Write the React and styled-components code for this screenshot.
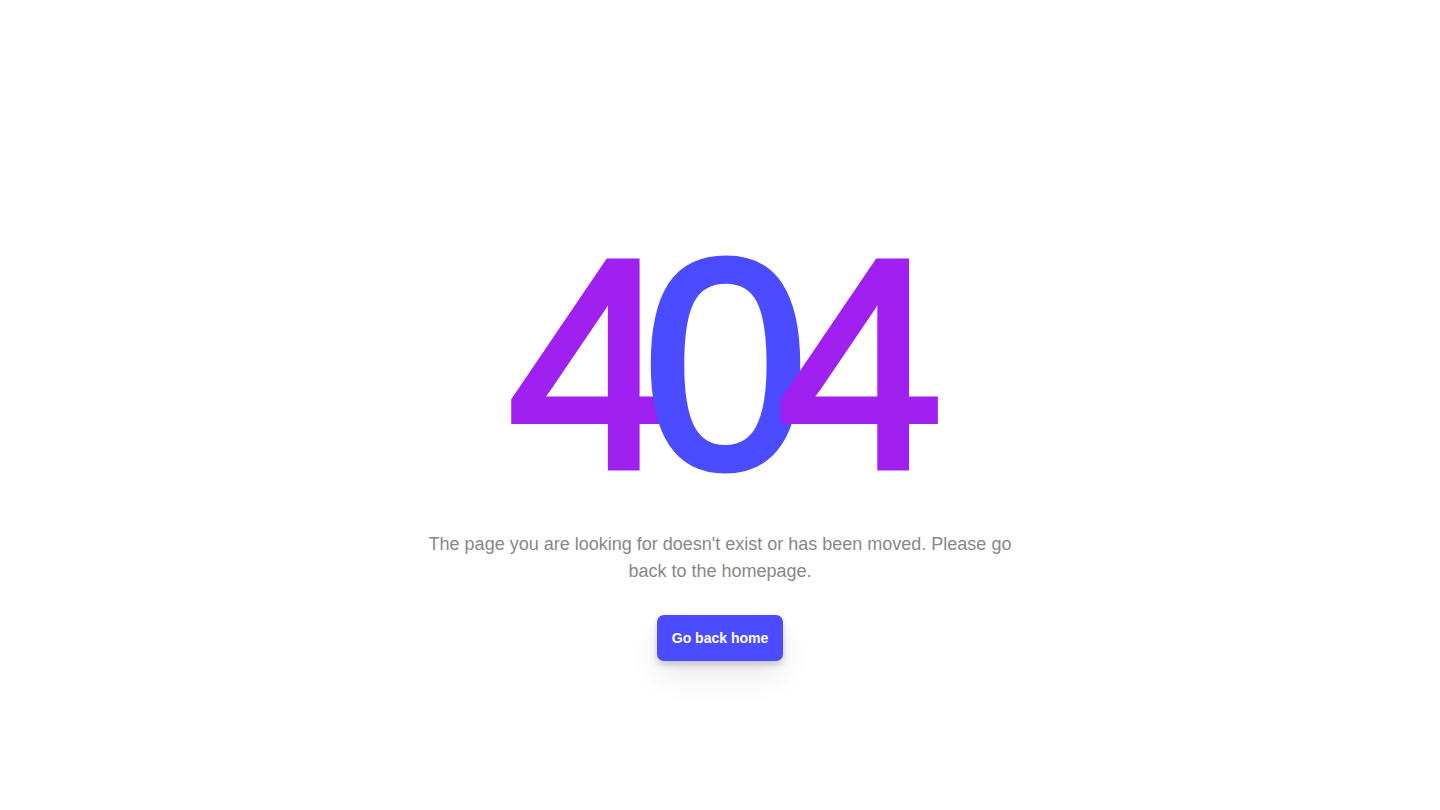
import styled, { createGlobalStyle } from "styled-components";

const GlobalStyle = createGlobalStyle`
  * {
    box-sizing: border-box;
  }
  body {
    margin: 0;
    background-color: #ffffff;
    font-family: "Liberation Sans", Arial, sans-serif;
  }
`;

const NotFoundPage = styled.main`
  display: flex;
  flex-direction: column;
  align-items: center;
  justify-content: center;
  min-height: 100vh;
  padding-top: 66px;
  text-align: center;
`;

const ErrorCode = styled.h1`
  display: flex;
  margin: 0;
  padding-left: 11px;
  font-size: 298px;
  font-weight: 400;
  line-height: 1;
`;

const Digit = styled.span`
  color: ${(props) => (props.$zero ? "#4b4bff" : "#a020f0")};
  -webkit-text-stroke: 7px ${(props) => (props.$zero ? "#4b4bff" : "#a020f0")};
  margin: ${(props) => (props.$zero ? "0 -31px" : "0")};
`;

const Message = styled.p`
  max-width: 600px;
  margin: 18px 0 0;
  color: #888888;
  font-size: 18px;
  line-height: 27px;
`;

const HomeButton = styled.button`
  margin-top: 30px;
  padding: 14px 15px;
  border: none;
  border-radius: 7px;
  background-color: #4b4bff;
  color: #ffffff;
  font-family: "Liberation Sans", Arial, sans-serif;
  font-size: 14px;
  font-weight: 700;
  line-height: 18px;
  cursor: pointer;
  box-shadow: 0 4px 6px rgba(0, 0, 0, 0.18), 0 16px 30px rgba(0, 0, 0, 0.08);
`;

export default function App() {
  return (
    <>
      <GlobalStyle />
      <NotFoundPage>
        <ErrorCode>
          <Digit>4</Digit>
          <Digit $zero>0</Digit>
          <Digit>4</Digit>
        </ErrorCode>
        <Message>
          The page you are looking for doesn't exist or has been moved. Please
          go back to the homepage.
        </Message>
        <HomeButton>Go back home</HomeButton>
      </NotFoundPage>
    </>
  );
}
